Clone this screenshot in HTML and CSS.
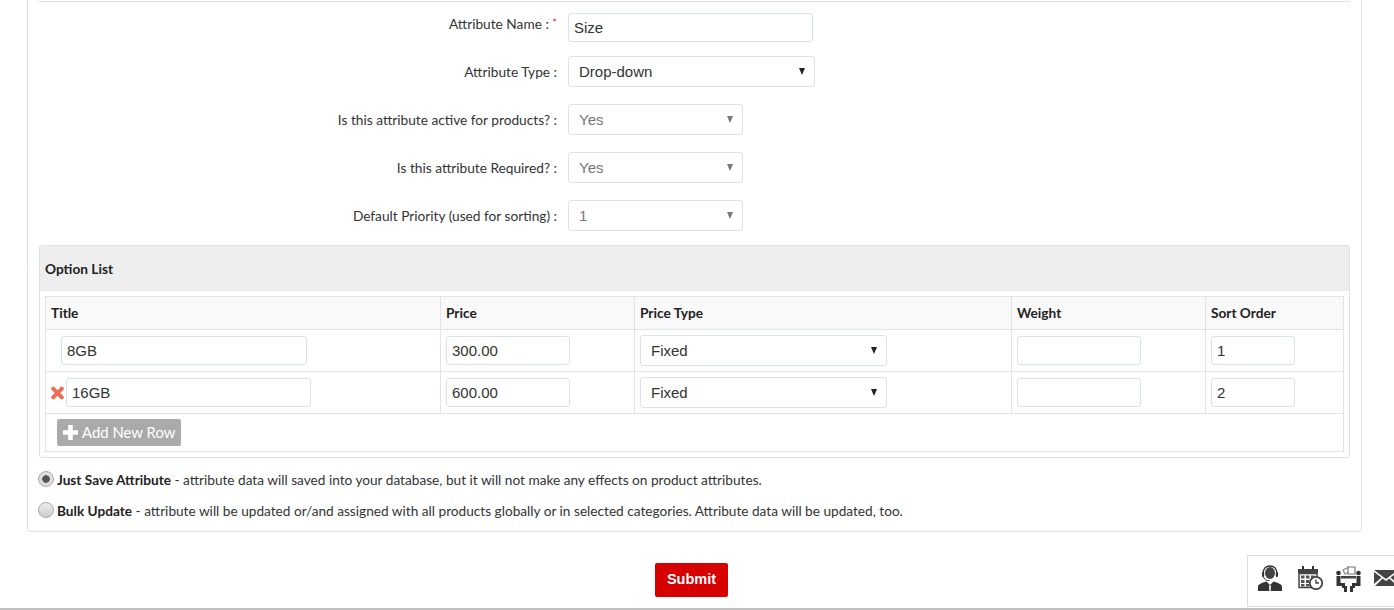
FILE: index.html
```html
<!DOCTYPE html>
<html>
<head>
<meta http-equiv="Content-Type" content="text/html;charset=utf-8">
<title>Edit Attribute</title>
<link rel="stylesheet" href="styles.css">
</head>
<body>
<div class="card">
    <div class="prev-panel"></div>
    <form class="attr-form">
        <div class="form-row">
            <label class="form-label name-label">Attribute Name : <span class="req">*</span></label>
            <input class="text-input name-input" type="text" value="Size">
        </div>
        <div class="form-row">
            <label class="form-label">Attribute Type :</label>
            <div class="select-wrap wide"><select class="select-box"><option>Drop-down</option></select></div>
        </div>
        <div class="form-row">
            <label class="form-label">Is this attribute active for products? :</label>
            <div class="select-wrap short off"><select class="select-box"><option>Yes</option></select></div>
        </div>
        <div class="form-row">
            <label class="form-label">Is this attribute Required? :</label>
            <div class="select-wrap short off"><select class="select-box"><option>Yes</option></select></div>
        </div>
        <div class="form-row last">
            <label class="form-label">Default Priority (used for sorting) :</label>
            <div class="select-wrap short off"><select class="select-box"><option>1</option></select></div>
        </div>

        <div class="panel">
            <div class="panel-head">Option List</div>
            <table class="option-table">
                <colgroup>
                    <col class="col-title"><col class="col-price"><col class="col-type"><col class="col-weight"><col class="col-sort">
                </colgroup>
                <thead>
                    <tr>
                        <th>Title</th>
                        <th>Price</th>
                        <th>Price Type</th>
                        <th>Weight</th>
                        <th>Sort Order</th>
                    </tr>
                </thead>
                <tbody>
                    <tr>
                        <td><div class="title-cell first"><input class="text-input title-input" type="text" value="8GB"></div></td>
                        <td><input class="text-input price-input" type="text" value="300.00"></td>
                        <td><div class="select-wrap cell-select"><select class="select-box"><option>Fixed</option></select></div></td>
                        <td><input class="text-input price-input" type="text" value=""></td>
                        <td><input class="text-input sort-input" type="text" value="1"></td>
                    </tr>
                    <tr>
                        <td>
                            <div class="title-cell">
                                <svg class="del-icon" width="13" height="14" viewBox="0 0 13 14"><path d="M2.200 2.700 L10.800 11.300 M10.800 2.700 L2.200 11.300" stroke="#ee6e55" stroke-width="4" stroke-linecap="round"/></svg>
                                <input class="text-input title-input" type="text" value="16GB">
                            </div>
                        </td>
                        <td><input class="text-input price-input" type="text" value="600.00"></td>
                        <td><div class="select-wrap cell-select"><select class="select-box"><option>Fixed</option></select></div></td>
                        <td><input class="text-input price-input" type="text" value=""></td>
                        <td><input class="text-input sort-input" type="text" value="2"></td>
                    </tr>
                    <tr class="add-row">
                        <td colspan="5">
                            <button class="add-btn" type="button">
                                <svg width="15" height="15" viewBox="0 0 15 15"><path d="M5.200 0h4.600v5.200H15v4.600H9.800V15H5.200V9.800H0V5.200h5.200z" fill="#fff"/></svg>
                                <span>Add New Row</span>
                            </button>
                        </td>
                    </tr>
                </tbody>
            </table>
        </div>

        <label class="radio-row">
            <input class="radio" type="radio" name="mode" checked>
            <span><b>Just Save Attribute</b> - attribute data will saved into your database, but it will not make any effects on product attributes.</span>
        </label>
        <label class="radio-row">
            <input class="radio" type="radio" name="mode">
            <span><b>Bulk Update</b> - attribute will be updated or/and assigned with all products globally or in selected categories. Attribute data will be updated, too.</span>
        </label>
    </form>
</div>

<button class="submit-btn" type="button"><span>Submit</span></button>
<div class="page-end"></div>

<div class="help-bar">
    <svg class="ico-agent" width="24" height="26" viewBox="0 0 24 26"><path d="M5 9C5 4 8 1 12 1s7 3 7 8" fill="none" stroke="#333" stroke-width="1.500"/><ellipse cx="12" cy="8" rx="5" ry="6" fill="#444"/><rect x="4" y="7" width="2.200" height="5" rx="1" fill="#333"/><rect x="17.800" y="7" width="2.200" height="5" rx="1" fill="#333"/><path d="M5.500 12c1 3 3 3.600 6 3.600" fill="none" stroke="#333" stroke-width="1"/><path d="M0 26v-4c0-3 4-4 8.500-5.500L12 20l3.500-3.500C20 18 24 19 24 22v4z" fill="#333"/><path d="M11 20.500h2L12.600 26h-1.200z" fill="#fff"/></svg>
    <svg class="ico-cal" width="25" height="24" viewBox="0 0 25 24"><path d="M0 3h20v4H0z" fill="#444"/><rect x="4" y="0" width="2" height="4" fill="#333"/><rect x="14" y="0" width="2" height="4" fill="#333"/><path d="M1 7.500h18v14H1z" fill="#fff" stroke="#444" stroke-width="1.500"/><path d="M3 9.500h3.500v3H3zM8 9.500h3.500v3H8zM13 9.500h3.500v3H13zM3 14h3.500v3H3zM8 14h3.500v3H8zM3 18h3.500v2.500H3zM8 18h3.500v2.500H8z" fill="#555"/><circle cx="18" cy="17" r="6.200" fill="#fff" stroke="#444" stroke-width="1.800"/><path d="M18 13.500V17h3" fill="none" stroke="#444" stroke-width="1.400"/></svg>
    <svg class="ico-meet" width="25" height="27" viewBox="0 0 25 27"><path d="M7 5l6-3 2 4-6 3z" fill="#fff" stroke="#888" stroke-width="1.200"/><path d="M12 2h7v7h-7z" fill="#fff" stroke="#777" stroke-width="1.200"/><circle cx="2.500" cy="8" r="2.300" fill="#333"/><circle cx="22.500" cy="8" r="2.300" fill="#333"/><path d="M0.500 11h4v7h4.500v3H0.500zM24.500 11h-4v7H16v3h8.500z" fill="#333"/><path d="M5 11h15v2.500H5z" fill="#444"/><path d="M6 21h5v6H8v-4H6zM19 21h-5v6h3v-4h2z" fill="#333"/></svg>
    <svg class="ico-mail" width="24" height="16" viewBox="0 0 24 16"><path d="M0 0h24L12 9z" fill="#444"/><path d="M0 2v12l7.500-6.500zM24 2v12l-7.500-6.500z" fill="#444"/><path d="M1 16l7.500-7.500L12 11l3.500-2.500L23 16z" fill="#444"/></svg>
</div>
</body>
</html>
```

FILE: styles.css
```css
html, body {
    margin: 0;
    height: 610px;
    overflow: hidden;
    background: #fff;
}

body {
    font-family: Lato, "Liberation Sans", sans-serif;
    font-size: 13.7px;
    color: #333;
}

.card {
    box-sizing: border-box;
    width: 1335px;
    margin-left: 27px;
    padding: 0 11px 5px;
    border: 1px solid #e1e1e1;
    border-top: 0;
    border-radius: 0 0 4px 4px;
}

.prev-panel {
    height: 1px;
    border: 1px solid #e1e1e1;
    border-top: 0;
    border-radius: 0 0 3px 3px;
}

.attr-form {
    padding-top: 6px;
}

.form-row {
    display: flex;
    align-items: flex-start;
    gap: 11px;
    height: 48px;
}

.form-row.last {
    height: 45px;
}

.form-label {
    width: 518px;
    margin-top: 6px;
    line-height: 20px;
    text-align: right;
    color: #333;
}

.name-label {
    margin-top: 5px;
}

.req {
    color: #d33;
    font-size: 11px;
    vertical-align: 2px;
}

.text-input {
    box-sizing: border-box;
    height: 29px;
    padding: 0 5px;
    border: 1px solid #dde2ea;
    border-radius: 3px;
    background: #fff;
    font-family: "Liberation Sans", Arial, sans-serif;
    font-size: 15px;
    color: #333;
    outline: 0;
}

.name-input {
    width: 245px;
    margin-top: 5px;
}

.select-wrap {
    position: relative;
    height: 31px;
}

.select-wrap::after {
    content: "";
    position: absolute;
    top: 12px;
    right: 10px;
    border-left: 3.5px solid transparent;
    border-right: 3.5px solid transparent;
    border-top: 7px solid #222;
    pointer-events: none;
}

.select-box {
    box-sizing: border-box;
    display: block;
    width: 100%;
    height: 31px;
    padding: 0 10px;
    border: 1px solid #dde2ea;
    border-radius: 3px;
    background: #fff;
    font-family: "Liberation Sans", Arial, sans-serif;
    font-size: 15px;
    color: #333;
    appearance: none;
    outline: 0;
}

.wide { width: 247px; }
.short { width: 175px; }
.cell-select { width: 247px; }

.off .select-box {
    color: #777;
}

.off::after {
    border-top-color: #777;
}

.panel {
    border: 1px solid #e1e1e1;
    border-radius: 3px;
}

.panel-head {
    height: 45px;
    padding-left: 5px;
    background: #eee;
    font-weight: 700;
    line-height: 46px;
    color: #222;
}

.option-table {
    table-layout: fixed;
    border-collapse: collapse;
    width: 1298px;
    margin: 5px;
}

.col-title { width: 395px; }
.col-price { width: 194px; }
.col-type { width: 377px; }
.col-weight { width: 194px; }
.col-sort { width: 138px; }

.option-table th,
.option-table td {
    box-sizing: border-box;
    padding: 0 5px;
    border: 1px solid #e3e3e3;
    text-align: left;
    vertical-align: middle;
}

.option-table th {
    height: 33px;
    padding-bottom: 2px;
    background: #f9f9f9;
    font-weight: 700;
    color: #222;
}

.option-table td {
    height: 42px;
}

.option-table .add-row td {
    height: 38px;
    padding-left: 11px;
}

.title-cell {
    display: flex;
    align-items: center;
    gap: 2px;
}

.title-cell.first {
    padding-left: 10px;
}

.title-input {
    width: 245px;
}

.first .title-input {
    width: 246px;
}

.del-icon {
    flex: none;
}

.price-input {
    display: block;
    width: 124px;
}

.sort-input {
    display: block;
    width: 84px;
}

.add-btn {
    display: flex;
    align-items: center;
    gap: 4px;
    box-sizing: border-box;
    width: 124px;
    height: 27px;
    padding: 0 6px;
    border: 0;
    border-radius: 2px;
    background: #aaa;
    font-family: Lato, "Liberation Sans", sans-serif;
    font-size: 14.900px;
    white-space: nowrap;
    color: #fff;
}

.add-btn svg {
    flex: none;
}

.add-btn span {
    margin-top: -1px;
}

.radio-row {
    display: flex;
    align-items: center;
    gap: 3px;
    height: 31px;
    margin-left: -1px;
    font-size: 13.650px;
}

.attr-form .panel + .radio-row {
    margin-top: 6px;
}

.radio {
    appearance: none;
    box-sizing: border-box;
    flex: none;
    width: 16px;
    height: 16px;
    margin: 0 0 2px;
    border: 1px solid #aaa;
    border-radius: 50%;
    background: linear-gradient(#eee, #ccc);
}

.radio:checked {
    background: radial-gradient(circle, #555 0 3.5px, #ddd 4px);
}

.radio-row b {
    color: #222;
}

.submit-btn {
    display: block;
    width: 73px;
    height: 34px;
    margin: 31px 0 0 655px;
    padding: 0 0 3px;
    border: 0;
    border-radius: 2px;
    background: #d60000;
    font-family: "Liberation Sans", Arial, sans-serif;
    font-size: 14.500px;
    font-weight: 700;
    color: #fff;
}

.page-end {
    height: 2px;
    margin-top: 11px;
    background: #c0c0c0;
}

.help-bar {
    position: fixed;
    left: 1247px;
    right: 0;
    bottom: 3px;
    box-sizing: border-box;
    height: 52px;
    display: flex;
    align-items: center;
    gap: 13px;
    padding: 0 0 6px 10px;
    border: 1px solid #ddd;
    border-right: 0;
    background: #fff;
    overflow: hidden;
}

.help-bar svg {
    flex: none;
    filter: blur(0.4px);
}

.help-bar .ico-agent {
    margin-right: 3px;
}
```
